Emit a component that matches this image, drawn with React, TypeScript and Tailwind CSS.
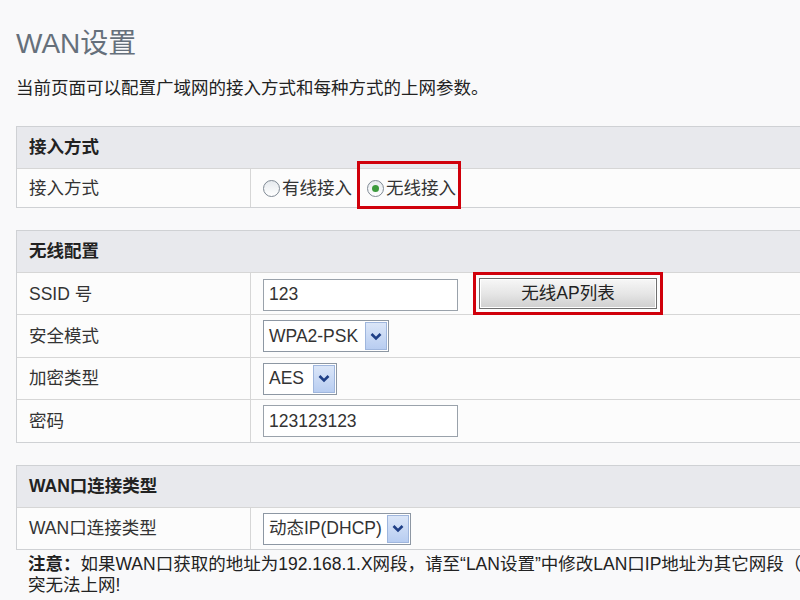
import React from 'react';

const font = { fontFamily: '"Liberation Sans", "Noto Sans CJK SC", sans-serif' };

const Radio: React.FC<{ checked?: boolean; label: string }> = ({ checked, label }) => (
  <label className="flex items-center">
    <span className="shrink-0 w-[17px] h-[17px] rounded-full border border-[#7f8994] bg-gradient-to-b from-[#e6eaee] to-white flex items-center justify-center">
      {checked && <span className="w-[7px] h-[7px] rounded-full bg-[#3c9a3c]" />}
    </span>
    <span className="ml-[2px]">{label}</span>
  </label>
);

const Chevron: React.FC = () => (
  <svg width="12" height="9" viewBox="0 0 12 9">
    <path d="M1.5 2 L6 6.5 L10.5 2" fill="none" stroke="#1f3f86" strokeWidth="2.6" />
  </svg>
);

const Select: React.FC<{ value: string; width: string }> = ({ value, width }) => (
  <div className={`flex items-center h-[32px] border border-[#8d97a3] bg-white ${width}`}>
    <span className="pl-[5px] flex-1 text-[#333] whitespace-nowrap">{value}</span>
    <span className="shrink-0 w-[22px] h-[28px] mr-[1px] flex items-center justify-center bg-gradient-to-b from-[#dbe6f8] to-[#b8cdf1] border border-[#9fb6dd]">
      <Chevron />
    </span>
  </div>
);

const TextInput: React.FC<{ value: string }> = ({ value }) => (
  <div className="w-[195px] h-[32px] border border-[#9aa2ab] bg-white flex items-center pl-[5px] text-[#333]">
    {value}
  </div>
);

const Row: React.FC<{ label: string; h?: string; children: React.ReactNode }> = ({ label, h = 'h-[43px]', children }) => (
  <div className={`grid grid-cols-[234px_1fr] border-t border-[#d6d6d6] bg-[#fcfcfc] ${h}`}>
    <div className="flex items-center pl-[12px] border-r border-[#d6d6d6]">{label}</div>
    <div className="flex items-center pl-[12px]">{children}</div>
  </div>
);

const Panel: React.FC<{ title: string; children: React.ReactNode }> = ({ title, children }) => (
  <div className="w-[900px] border border-[#cfd1d4]">
    <div className="h-[41px] bg-[#e8e9ed] flex items-center pl-[12px] font-bold text-[#222]">{title}</div>
    {children}
  </div>
);

export default function App() {
  return (
    <div className="w-[800px] h-[600px] overflow-hidden bg-[#f9f9fa] text-[17.5px] text-[#333]" style={font}>
      <div className="pl-4 pt-[28px]">
        <h1 className="text-[28px] leading-[31px] text-[#66707b] font-normal">WAN设置</h1>
        <p className="mt-[19px] leading-[20px] text-[#222]">当前页面可以配置广域网的接入方式和每种方式的上网参数。</p>

        <div className="mt-[28px]">
          <Panel title="接入方式">
            <Row label="接入方式" h="h-[39px]">
              <div className="flex items-center">
                <Radio label="有线接入" />
                <div className="relative ml-[15px]">
                  <div className="absolute -left-[10px] -top-[14px] w-[104px] h-[48px] border-[3px] border-[#d0000b]" />
                  <Radio checked label="无线接入" />
                </div>
              </div>
            </Row>
          </Panel>
        </div>

        <div className="mt-[22px]">
          <Panel title="无线配置">
            <Row label="SSID 号" h="h-[42px]">
              <TextInput value="123" />
              <div className="relative -top-[1px] ml-[15px] border-[3px] border-[#d0000b] p-[3px]">
                <button className="w-[178px] h-[31px] border border-[#6f6f6f] bg-gradient-to-b from-[#f7f7f7] via-[#e6e6e6] to-[#cfcfcf] text-[#222] shadow-[inset_0_0_0_1px_#ffffff]">
                  无线AP列表
                </button>
              </div>
            </Row>
            <Row label="安全模式">
              <Select value="WPA2-PSK" width="w-[126px]" />
            </Row>
            <Row label="加密类型" h="h-[42px]">
              <Select value="AES" width="w-[74px]" />
            </Row>
            <Row label="密码">
              <TextInput value="123123123" />
            </Row>
          </Panel>
        </div>

        <div className="mt-[22px]">
          <Panel title="WAN口连接类型">
            <Row label="WAN口连接类型" h="h-[42px]">
              <Select value="动态IP(DHCP)" width="w-[148px]" />
            </Row>
          </Panel>
        </div>

        <p className="pl-[12px] mt-[4px] leading-[21px] whitespace-nowrap text-[#222]">
          <span className="font-bold">注意：</span>如果WAN口获取的地址为192.168.1.X网段，请至“LAN设置”中修改LAN口IP地址为其它网段（如192.168.2.X），否则会造成IP冲
          <br />
          突无法上网!
        </p>
      </div>
    </div>
  );
}
